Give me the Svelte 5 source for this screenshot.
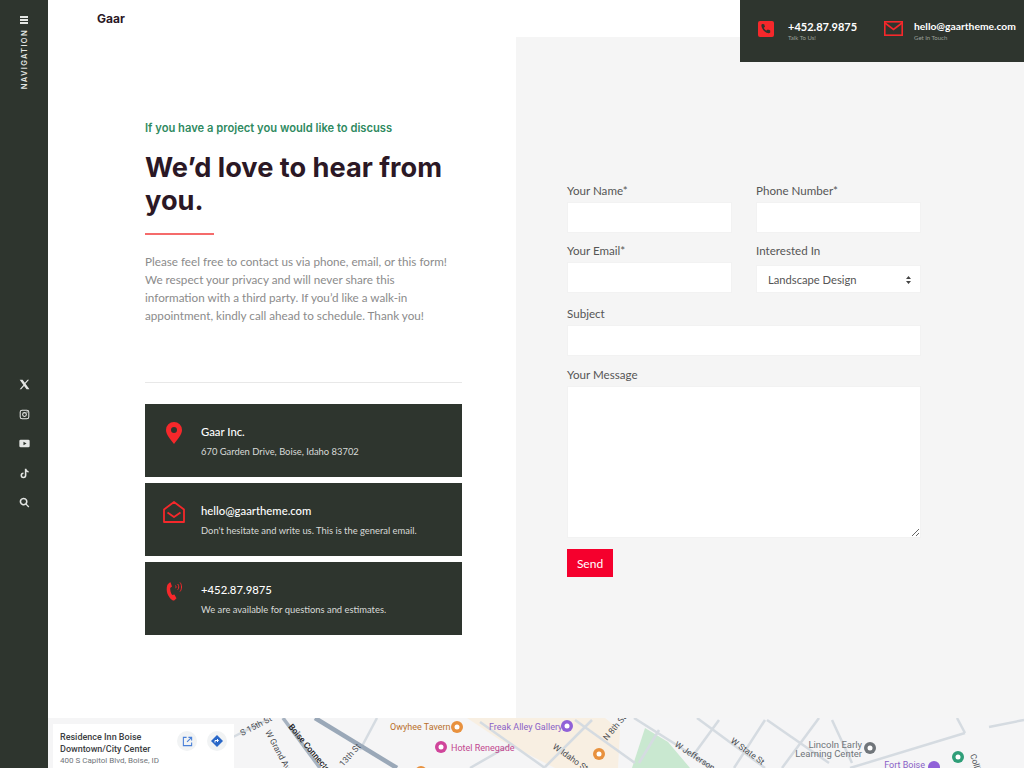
<script>
  const socials = ['x', 'instagram', 'youtube', 'tiktok', 'search'];

  const cards = [
    { icon: 'pin', title: 'Gaar Inc.', text: '670 Garden Drive, Boise, Idaho 83702' },
    { icon: 'mail', title: 'hello@gaartheme.com', text: "Don't hesitate and write us. This is the general email." },
    { icon: 'phone', title: '+452.87.9875', text: 'We are available for questions and estimates.' }
  ];

  // thin grey streets on the map, in page coordinates
  const streets = [
    'M233 737 L267 720',
    'M377 718 L360 750',
    'M575 720 L635 763',
    'M545 767 L592 720',
    'M480 722 L545 768',
    'M510 745 L470 768',
    'M634 718 L672 742 L712 768',
    'M639 763 L659 730',
    'M697 718 L765 768',
    'M719 720 L692 757',
    'M765 720 L734 768',
    'M767 720 L829 763',
    'M819 718 L782 768',
    'M832 720 L852 763',
    'M850 768 L965 733',
    'M957 718 L965 733',
    'M989 727 L1024 720'
  ];
</script>

<div class="page">
  <aside class="sidebar">
    <div class="nav">
      <span class="bars"><i></i><i></i><i></i></span>
      <span class="nav-label">NAVIGATION</span>
    </div>
    <div class="socials">
      {#each socials as s}
        <svg viewBox="0 0 16 16" width="11" height="11" fill="#e4e6e4">
          {#if s === 'x'}
            <path d="M1 1h4.200l3.300 4.500L12.400 1h2.200L9.500 7l5.700 8H11L7.400 10 3.200 15H1l5.400-6.300z" />
          {:else if s === 'instagram'}
            <path fill-rule="evenodd" d="M4.500 1h7A3.500 3.500 0 0 1 15 4.500v7a3.500 3.500 0 0 1-3.500 3.500h-7A3.500 3.500 0 0 1 1 11.500v-7A3.500 3.500 0 0 1 4.500 1zm0 1.500a2 2 0 0 0-2 2v7a2 2 0 0 0 2 2h7a2 2 0 0 0 2-2v-7a2 2 0 0 0-2-2zM8 4.500a3.500 3.500 0 1 1 0 7 3.500 3.500 0 0 1 0-7zM8 6a2 2 0 1 0 0 4 2 2 0 0 0 0-4zm3.800-2.800a1 1 0 1 1 0 2 1 1 0 0 1 0-2z" />
          {:else if s === 'youtube'}
            <path fill-rule="evenodd" d="M2.500 2.500h11A2 2 0 0 1 15.500 4.500v7a2 2 0 0 1-2 2h-11a2 2 0 0 1-2-2v-7a2 2 0 0 1 2-2zM6.500 5.500v5L11 8z" />
          {:else if s === 'tiktok'}
            <path d="M8.500 1h2.300c.2 1.800 1.300 3 3.200 3.200v2.300c-1.200 0-2.300-.4-3.200-1v5.200A4.300 4.300 0 1 1 6.500 6.400v2.400a2 2 0 1 0 2 1.900z" />
          {:else}
            <path fill-rule="evenodd" d="M6.700 1a5.700 5.700 0 0 1 4.600 9l3.700 3.700-1.400 1.400-3.700-3.700A5.700 5.700 0 1 1 6.700 1zm0 2.200a3.500 3.500 0 1 0 0 7 3.500 3.500 0 0 0 0-7z" />
          {/if}
        </svg>
      {/each}
    </div>
  </aside>

  <div class="main">
    <header class="topbar">
      <span class="brand">Gaar</span>
    </header>

    <div class="contact-strip">
      <div class="strip-item">
        <svg viewBox="0 0 16 16" width="16" height="16">
          <rect width="16" height="16" rx="2" fill="#f5282b" />
          <path d="M4.200 3l2 .3.8 2.400-1.200 1c.5 1.300 1.500 2.300 2.800 2.900l1.100-1.200 2.400.9.200 2c-.2.600-1 1-1.700.9C7 11.800 4 8.800 3.400 4.800 3.300 4 3.600 3.300 4.200 3z" fill="#2e352e" />
        </svg>
        <div>
          <div class="strip-title phone">+452.87.9875</div>
          <div class="strip-sub">Talk To Us!</div>
        </div>
      </div>
      <div class="strip-item mail">
        <svg viewBox="0 0 19 15" width="19" height="15" fill="none" stroke="#f5282b" stroke-width="1.600">
          <rect x=".8" y=".8" width="17.400" height="13.400" />
          <path d="M1 2l8.500 6.500L18 2" />
        </svg>
        <div>
          <div class="strip-title">hello@gaartheme.com</div>
          <div class="strip-sub">Get In Touch</div>
        </div>
      </div>
    </div>

    <div class="columns">
      <section class="intro">
        <p class="eyebrow">If you have a project you would like to discuss</p>
        <h1>We’d love to hear from you.</h1>
        <div class="rule"></div>
        <p class="lead">
          Please feel free to contact us via phone, email, or this form!<br />
          We respect your privacy and will never share this<br />
          information with a third party. If you’d like a walk-in<br />
          appointment, kindly call ahead to schedule. Thank you!
        </p>
        <hr />
        <div class="cards">
          {#each cards as card}
            <div class="card">
              <span class="card-icon">
                {#if card.icon === 'pin'}
                  <svg viewBox="0 0 16 22" width="16" height="22">
                    <path fill="#f5282b" fill-rule="evenodd" d="M8 0a8 8 0 0 1 8 8c0 4.500-4.500 9.500-8 14C4.500 17.500 0 12.500 0 8a8 8 0 0 1 8-8zm0 5a3 3 0 1 0 0 6 3 3 0 0 0 0-6z" />
                  </svg>
                {:else if card.icon === 'mail'}
                  <svg viewBox="0 0 22 22" width="22" height="22" fill="none" stroke="#f5282b" stroke-width="1.800" stroke-linejoin="round">
                    <path d="M1 8.500L11 1l10 7.500V21H1z" />
                    <path d="M4.500 11.500l6.500 4.500 6.500-4.500" />
                  </svg>
                {:else}
                  <svg viewBox="0 0 18 22" width="18" height="22">
                    <path fill="#f5282b" d="M5.500 2.200l1.500 4.200-1.800 1.500c-.1 2.500.6 5 2 7l2.200-.5 2.100 3.900-2 1.900c-.6.500-1.400.5-2 .1C2.700 17 .7 11 2.200 5.500c.4-1.300 1.700-2.700 3.300-3.300z" />
                    <path fill="none" stroke="#f5282b" stroke-width="1" d="M10.500 5.500c.7.700.7 2 0 2.700M12.700 4c1.400 1.400 1.400 4.300 0 5.700M15 2.500c2 2.300 2 6.700 0 9" />
                  </svg>
                {/if}
              </span>
              <div>
                <div class="card-title">{card.title}</div>
                <div class="card-text">{card.text}</div>
              </div>
            </div>
          {/each}
        </div>
      </section>

      <section class="form-side">
        <form class="form" onsubmit={(e) => e.preventDefault()}>
          <div class="row">
            <label>
              <span>Your Name*</span>
              <input type="text" />
            </label>
            <label>
              <span>Phone Number*</span>
              <input type="tel" />
            </label>
          </div>
          <div class="row">
            <label>
              <span>Your Email*</span>
              <input type="email" />
            </label>
            <label>
              <span>Interested In</span>
              <div class="select-wrap">
                <select>
                  <option>Landscape Design</option>
                </select>
                <svg viewBox="0 0 5 8" width="5" height="8" fill="#444">
                  <path d="M2.500 0L5 3H0zM2.500 8L0 5h5z" />
                </svg>
              </div>
            </label>
          </div>
          <label class="subject">
            <span>Subject</span>
            <input type="text" />
          </label>
          <label class="message">
            <span>Your Message</span>
            <textarea></textarea>
          </label>
          <button type="submit">Send</button>
        </form>
      </section>
    </div>

    <div class="map">
      <svg class="map-art" viewBox="48 718 976 50" width="976" height="50">
        <rect x="48" y="718" width="976" height="50" fill="#f5f5f6" />
        <path d="M467 718 H605 L620 730 L618 768 H555 L500 740z" fill="#f8efe2" />
        <path d="M645 728 L668 742 L690 768 H632z" fill="#c9e8d0" />
        {#each streets as d}
          <path {d} fill="none" stroke="#d5dbe1" stroke-width="2.500" />
        {/each}
        <path d="M315 718 L397 768" fill="none" stroke="#9aa8b8" stroke-width="4.500" />
        <path d="M283 718 L320 768" fill="none" stroke="#a6b2c0" stroke-width="3.500" />

        <g font-family="Roboto, sans-serif" font-size="8.500" fill="#4a4d52">
          <text transform="translate(242 736) rotate(-27)">S 15th St</text>
          <text transform="translate(265 732) rotate(62)">W Grand Av</text>
          <text transform="translate(288 727) rotate(50)" fill="#202124" font-weight="500">Boise Connector</text>
          <text transform="translate(343 767) rotate(-48)">13th St</text>
          <text transform="translate(607 741) rotate(-50)">N 8th St</text>
          <text transform="translate(552 748) rotate(35)">W Idaho St</text>
          <text transform="translate(674 746) rotate(33)">W Jefferson</text>
          <text transform="translate(730 742) rotate(36)">W State St</text>
          <text transform="translate(970 755) rotate(72)">Collister</text>
        </g>
        <g font-family="Roboto, sans-serif" font-size="9">
          <text x="390" y="730" fill="#b9702c">Owyhee Tavern</text>
          <text x="489" y="730" fill="#8a5fc7">Freak Alley Gallery</text>
          <text x="451" y="751" fill="#c2478f">Hotel Renegade</text>
          <text x="862" y="748" text-anchor="end" fill="#70757a" font-size="9.500">Lincoln Early</text>
          <text x="862" y="757" text-anchor="end" fill="#70757a" font-size="9.500">Learning Center</text>
          <text x="925" y="768" text-anchor="end" fill="#8a5fc7">Fort Boise</text>
        </g>

        <g fill="#fff">
          <circle cx="457" cy="727" r="6" fill="#e8913e" />
          <circle cx="457" cy="727" r="2.500" />
          <circle cx="567" cy="726" r="6" fill="#9061d8" />
          <circle cx="567" cy="726" r="2.500" />
          <circle cx="441" cy="747" r="6" fill="#d0459b" />
          <circle cx="441" cy="747" r="2.500" />
          <circle cx="599" cy="754" r="6" fill="#e8913e" />
          <circle cx="599" cy="754" r="2.500" />
          <circle cx="421" cy="772" r="6" fill="#e8913e" />
          <circle cx="870" cy="748" r="6" fill="#70757a" />
          <circle cx="870" cy="748" r="2.500" />
          <circle cx="958" cy="757" r="6" fill="#2f9e78" />
          <circle cx="958" cy="757" r="2.500" />
          <circle cx="934" cy="767" r="6" fill="#9061d8" />
        </g>
      </svg>

      <div class="place-card">
        <div class="place-text">
          <div class="place-name">Residence Inn Boise Downtown/City Center</div>
          <div class="place-address">400 S Capitol Blvd, Boise, ID 83702, USA</div>
        </div>
        <span class="round">
          <svg viewBox="0 0 12 12" width="11" height="11" fill="none" stroke="#4a80d8" stroke-width="1.200">
            <path d="M5 1.500H1.500v9h9V7M7 1.500h3.500V5M10.500 1.500L5.500 6.500" />
          </svg>
        </span>
        <span class="round">
          <svg viewBox="0 0 12 12" width="12" height="12">
            <path d="M6 0l6 6-6 6-6-6z" fill="#2a68c8" />
            <path d="M4 7.500V5.500h3M6 4l1.500 1.500L6 7" fill="none" stroke="#fff" stroke-width="1" />
          </svg>
        </span>
      </div>
    </div>
  </div>
</div>

<style>
  :global(body) {
    margin: 0;
    background: #fff;
  }

  .page {
    display: flex;
    height: 768px;
    overflow: hidden;
    font-family: "Lato", sans-serif;
  }

  .sidebar {
    width: 48px;
    flex: none;
    background: #2e352e;
    display: flex;
    flex-direction: column;
    align-items: center;
  }

  .nav {
    display: flex;
    flex-direction: column;
    align-items: center;
    gap: 5px;
    padding-top: 16px;
    height: 73px;
  }

  .bars {
    display: flex;
    flex-direction: column;
    gap: 1.500px;
  }

  .bars i {
    display: block;
    width: 8px;
    height: 1.500px;
    background: #e4e6e4;
  }

  .nav-label {
    writing-mode: vertical-rl;
    transform: rotate(180deg);
    font-family: "Inter", sans-serif;
    font-size: 7.500px;
    font-weight: 600;
    letter-spacing: 1.350px;
    color: #e4e6e4;
  }

  .socials {
    margin-top: 290px;
    display: flex;
    flex-direction: column;
    align-items: center;
    gap: 18.500px;
  }

  .main {
    flex: 1;
    position: relative;
    display: flex;
    flex-direction: column;
    min-width: 0;
  }

  .topbar {
    height: 37px;
    flex: none;
    box-sizing: border-box;
    padding: 0 0 1px 49px;
    display: flex;
    align-items: center;
  }

  .brand {
    font-family: "Inter", sans-serif;
    font-size: 12px;
    font-weight: 700;
    color: #2b1825;
  }

  .contact-strip {
    position: absolute;
    top: 0;
    right: 0;
    width: 284px;
    height: 62px;
    box-sizing: border-box;
    background: #2e352e;
    padding-left: 18px;
    padding-top: 20px;
    display: flex;
    gap: 27px;
    color: #fff;
  }

  .strip-item {
    display: flex;
    align-items: flex-start;
    gap: 14px;
  }

  .strip-item.mail {
    gap: 11px;
  }

  .strip-item svg {
    margin-top: 1px;
  }

  .strip-title {
    font-size: 10.300px;
    font-weight: 700;
    line-height: 13px;
    white-space: nowrap;
  }

  .strip-title.phone {
    font-size: 11px;
  }

  .strip-sub {
    font-size: 6px;
    line-height: 10px;
    color: #9ba09b;
  }

  .columns {
    flex: 1;
    display: flex;
    min-height: 0;
  }

  .intro {
    width: 468px;
    flex: none;
    box-sizing: border-box;
    padding: 83px 54px 0 97px;
  }

  .eyebrow {
    margin: 0;
    font-family: "Inter", sans-serif;
    font-size: 11.200px;
    font-weight: 600;
    line-height: 16px;
    color: #2f8a5f;
  }

  h1 {
    margin: 15px 0 0;
    font-family: "Inter", sans-serif;
    font-size: 27.200px;
    font-weight: 700;
    line-height: 33px;
    color: #2b1825;
  }

  .rule {
    width: 69px;
    height: 2px;
    margin-top: 16px;
    background: #f56b6b;
  }

  .lead {
    margin: 17px 0 0;
    font-size: 11.700px;
    line-height: 18px;
    color: #8b8b8b;
  }

  hr {
    margin: 58px 0 0;
    border: 0;
    border-top: 1px solid #e8e8e8;
  }

  .cards {
    margin-top: 21px;
    display: flex;
    flex-direction: column;
    gap: 6px;
  }

  .card {
    height: 73px;
    box-sizing: border-box;
    background: #2e352e;
    display: flex;
    align-items: center;
    position: relative;
    padding-left: 56px;
    color: #fff;
  }

  .card-icon {
    position: absolute;
    left: 18px;
    top: 18px;
    width: 22px;
    display: flex;
    justify-content: center;
  }

  .card-title {
    font-size: 11.300px;
    font-weight: 500;
    line-height: 16px;
    padding-top: 1px;
  }

  .card-text {
    margin-top: 5px;
    font-size: 9.400px;
    line-height: 14px;
    color: #d8dad8;
  }

  .form-side {
    flex: 1;
    background: #f5f5f5;
    padding: 147px 103px 0 51px;
  }

  .form {
    display: flex;
    flex-direction: column;
    gap: 11px;
  }

  .row {
    display: grid;
    grid-template-columns: 165px 165px;
    gap: 24px;
  }

  label {
    display: flex;
    flex-direction: column;
  }

  label span {
    font-size: 11.600px;
    line-height: 14px;
    margin-bottom: 4px;
    color: #555;
  }

  .subject {
    margin-top: 3px;
  }

  .message {
    margin-top: 1px;
  }

  input,
  select,
  textarea {
    display: block;
    width: 100%;
    box-sizing: border-box;
    border: 1px solid #f2f2f2;
    border-radius: 0;
    background: #fff;
    outline: none;
    margin: 0;
  }

  input {
    height: 31px;
  }

  .select-wrap {
    position: relative;
    padding-top: 3px;
  }

  .select-wrap svg {
    position: absolute;
    right: 10px;
    top: 14px;
  }

  select {
    height: 28px;
    padding-left: 11px;
    appearance: none;
    font-family: "Lato", sans-serif;
    font-size: 11.200px;
    color: #555;
  }

  textarea {
    height: 152px;
    resize: vertical;
  }

  button {
    width: 46px;
    height: 28px;
    border: 0;
    padding: 0;
    background: #f5002d;
    color: #fff;
    font-family: "Lato", sans-serif;
    font-size: 12px;
    cursor: pointer;
  }

  .map {
    height: 50px;
    flex: none;
    position: relative;
    overflow: hidden;
  }

  .map-art {
    display: block;
  }

  .place-card {
    position: absolute;
    left: 5px;
    top: 6px;
    width: 181px;
    height: 60px;
    box-sizing: border-box;
    background: #fff;
    padding: 7px 0 0 7px;
    display: flex;
    gap: 10px;
    font-family: "Roboto", sans-serif;
  }

  .place-text {
    width: 107px;
    flex: none;
  }

  .place-name {
    font-size: 9px;
    font-weight: 500;
    line-height: 12px;
    color: #3c4043;
  }

  .place-address {
    font-size: 8px;
    line-height: 12px;
    color: #70757a;
  }

  .round {
    width: 20px;
    height: 20px;
    border-radius: 50%;
    background: #f1f3f4;
    display: flex;
    align-items: center;
    justify-content: center;
  }
</style>
